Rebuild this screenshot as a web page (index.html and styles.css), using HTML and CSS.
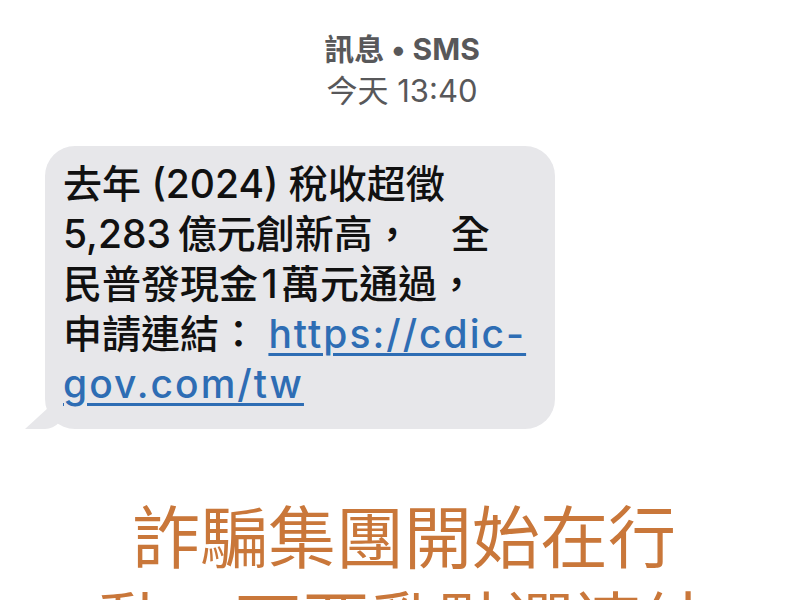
FILE: index.html
```html
<!DOCTYPE html>
<html lang="zh-Hant">
<head>
<meta charset="utf-8">
<link rel="stylesheet" href="styles.css">
</head>
<body>
<div class="page">
  <div class="meta">
    <div class="meta-title">訊息 • SMS</div>
    <div class="meta-time">今天 13:40</div>
  </div>
  <div class="thread">
    <div class="bubble">
      <p class="msg">去年 (2024) 稅收超徵<br>5,283&#8201;億元創新高，&#8195;全<br>民普發現金&#8202;1&#8202;萬元通過，<br>申請連結： <a class="link" href="#">https://cdic-<br>gov.com/tw</a></p>
      <span class="tail"></span>
    </div>
  </div>
  <div class="warning">詐騙集團開始在行<br>動，不要亂點選連結</div>
</div>
</body>
</html>
```
FILE: styles.css
```css
html, body {
  margin: 0;
  padding: 0;
  background: #ffffff;
}
.page {
  width: 800px;
  height: 600px;
  overflow: hidden;
  font-family: "Inter", "Noto Sans CJK TC", sans-serif;
}
.meta {
  display: flex;
  flex-direction: column;
  align-items: center;
  padding-top: 29px;
  padding-left: 4px;
  color: #58585a;
  font-size: 30px;
  line-height: 41px;
}
.meta-title {
  font-weight: 700;
}
.meta-time {
  font-weight: 400;
  font-size: 31px;
}
.thread {
  padding: 35px 0 0 45px;
}
.bubble {
  position: relative;
  width: 510px;
  box-sizing: border-box;
  background: #e7e7ea;
  border-radius: 30px;
  padding: 13px 8px 20px 18px;
}
.msg {
  margin: 0;
  color: #111111;
  font-size: 39px;
  line-height: 50px;
  font-weight: 500;
  letter-spacing: 0;
}
.link {
  color: #2e6db4;
  letter-spacing: 2px;
  text-decoration: underline;
  text-decoration-thickness: 3px;
  text-underline-offset: 5px;
}
.tail {
  position: absolute;
  left: -20px;
  bottom: 0;
  width: 40px;
  height: 22px;
  background: #e7e7ea;
  border-bottom-right-radius: 20px 22px;
  clip-path: polygon(0 100%, 60% 0, 100% 0, 100% 100%);
}
.warning {
  margin-top: 62px;
  text-align: center;
  padding-left: 8px;
  color: #c9773a;
  font-family: "Noto Sans CJK TC", sans-serif;
  font-weight: 400;
  font-size: 68px;
  line-height: 86px;
}
```
